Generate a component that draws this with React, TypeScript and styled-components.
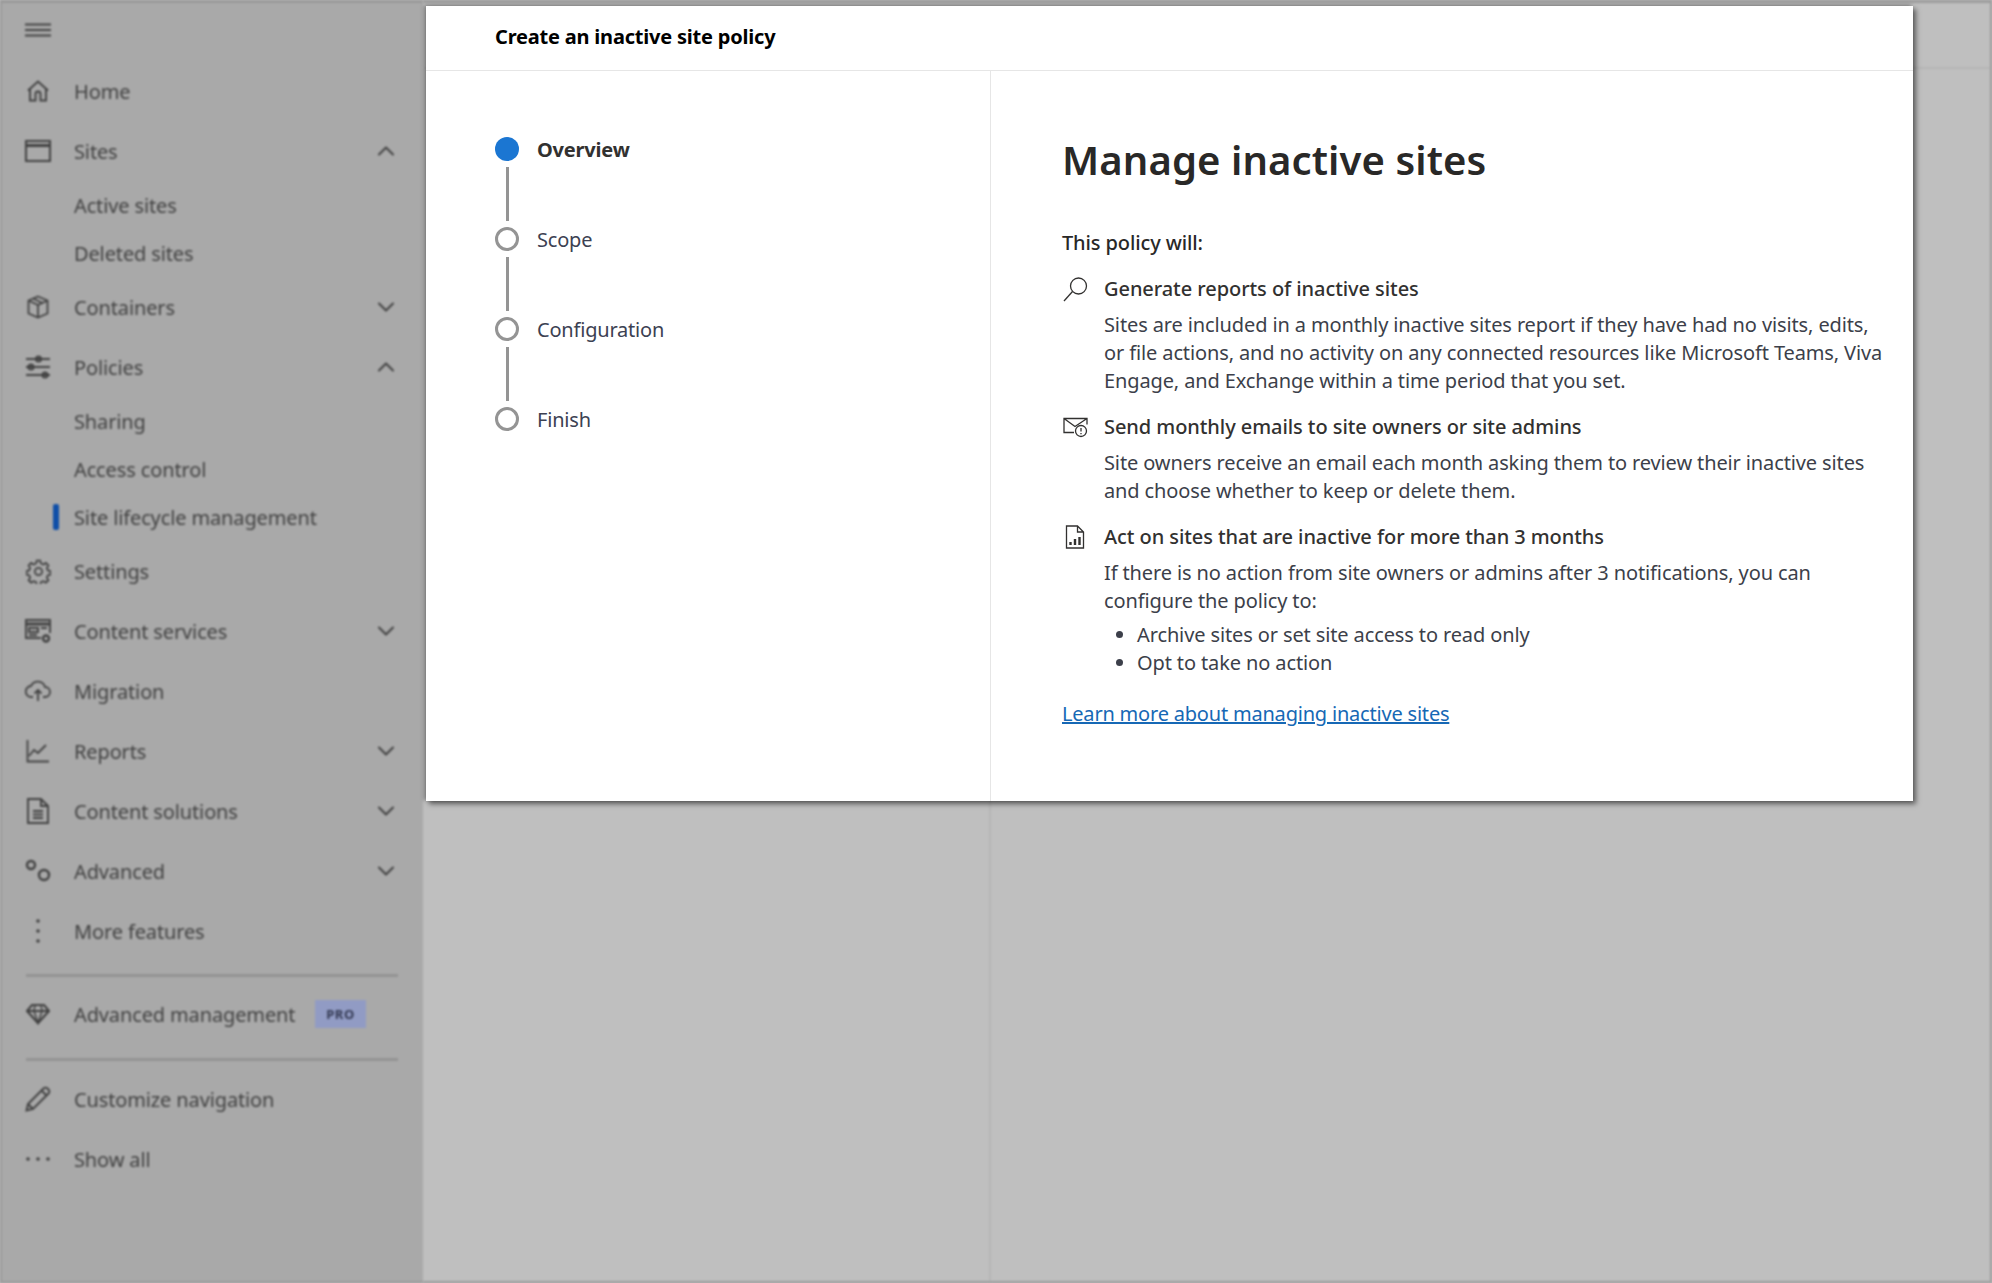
import React from "react";
import styled, { createGlobalStyle } from "styled-components";
import { ChevronDown, ChevronUp } from "lucide-react";

const GlobalStyle = createGlobalStyle`
  html, body {
    margin: 0;
    padding: 0;
    background: #bfbfbf;
  }
  * {
    box-sizing: border-box;
  }
`;

const font = `"Noto Sans", "Open Sans", "Liberation Sans", sans-serif`;

const Page = styled.div`
  position: relative;
  width: 1992px;
  height: 1283px;
  overflow: hidden;
  display: flex;
  font-family: ${font};
  background: #bfbfbf;
`;

const Backdrop = styled.div`
  flex: 1;
  display: flex;
  filter: blur(0.8px);
  border: 2px solid #9c9c9c;
  border-left: 0;
  border-top-width: 3px;
`;

const Sidebar = styled.nav`
  width: 423px;
  flex: none;
  background: #a9a9a9;
  border: 2px solid #999;
  border-right: 0;
  border-top-width: 3px;
  filter: blur(1px);
  color: #414141;
`;

const Burger = styled.div`
  height: 58px;
  padding: 20px 0 0 23px;
`;

const Row = styled.div<{ $sub?: boolean }>`
  position: relative;
  display: flex;
  align-items: center;
  height: ${(p) => (p.$sub ? "48px" : "60px")};
  padding-left: ${(p) => (p.$sub ? "72px" : "23px")};
  padding-right: 23px;
  font-size: 20px;
  letter-spacing: -0.13px;
`;

const IconSlot = styled.span`
  width: 26px;
  height: 26px;
  margin-right: 23px;
  flex: none;
  display: flex;
  align-items: center;
  justify-content: center;
`;

const Label = styled.span`
  flex: 1;
  white-space: nowrap;
`;

const Marker = styled.span`
  position: absolute;
  left: 51px;
  top: 11px;
  width: 6px;
  height: 26px;
  border-radius: 2px;
  background: #0f4fa8;
`;

const Divider = styled.div<{ $last?: boolean }>`
  height: 3px;
  margin: ${(p) => (p.$last ? "14px 25px 8px 24px" : "13px 25px 7px 24px")};
  background: #939393;
`;

const ProBadge = styled.span`
  margin-right: 34px;
  width: 51px;
  height: 28px;
  display: flex;
  align-items: center;
  justify-content: center;
  background: #919bc4;
  color: #343a54;
  font-size: 13px;
  font-weight: 700;
  letter-spacing: 0.6px;
`;

const Main = styled.div`
  flex: 1;
  display: flex;
  flex-direction: column;
`;

const MainHeader = styled.div`
  height: 66px;
  border-bottom: 2px solid #b6b6b6;
`;

const MainBody = styled.div`
  flex: 1;
  margin-left: 566px;
  border-left: 2px solid #b6b6b6;
`;

const Panel = styled.section`
  position: absolute;
  left: 426px;
  top: 6px;
  width: 1487px;
  height: 795px;
  display: flex;
  flex-direction: column;
  background: #fff;
  box-shadow: 3px 3px 5px rgba(0, 0, 0, 0.5), -2px -1px 4px rgba(0, 0, 0, 0.35);
`;

const PanelHeader = styled.header`
  height: 65px;
  flex: none;
  display: flex;
  align-items: center;
  padding: 0 0 4px 69px;
  border-bottom: 1px solid #e6e6e6;
  font-size: 20px;
  font-weight: 700;
  letter-spacing: -0.2px;
  color: #000;
`;

const PanelBody = styled.div`
  flex: 1;
  display: flex;
`;

const StepColumn = styled.div`
  width: 565px;
  flex: none;
  padding: 66px 0 0 69px;
  border-right: 1px solid #e6e6e6;
`;

const Step = styled.div`
  display: flex;
  align-items: center;
  height: 24px;
`;

const StepDot = styled.span<{ $active?: boolean }>`
  width: 24px;
  height: 24px;
  border-radius: 50%;
  flex: none;
  border: ${(p) => (p.$active ? "none" : "3px solid #949494")};
  background: ${(p) => (p.$active ? "#1b76d2" : "#fff")};
`;

const StepLabel = styled.span<{ $active?: boolean }>`
  margin-left: 18px;
  font-size: 20px;
  letter-spacing: -0.2px;
  font-weight: ${(p) => (p.$active ? 700 : 400)};
  color: ${(p) => (p.$active ? "#323130" : "#3c4152")};
`;

const StepLine = styled.div`
  width: 3px;
  height: 54px;
  margin: 6px 0 6px 11px;
  background: #949494;
`;

const Content = styled.div`
  flex: 1;
  padding: 0 0 0 71px;
  color: #3c3f4a;
  font-size: 20px;
  line-height: 28px;
  letter-spacing: -0.12px;
`;

const Title = styled.h1`
  margin: 61px 0 0;
  height: 56px;
  font-size: 40px;
  line-height: 56px;
  font-weight: 600;
  letter-spacing: 0.1px;
  color: #292827;
`;

const Lead = styled.div`
  margin-top: 41px;
  font-weight: 500;
  color: #292827;
`;

const Item = styled.div`
  margin-top: 18px;
  display: grid;
  grid-template-columns: 42px 1fr;
`;

const ItemIcon = styled.span`
  width: 26px;
  height: 28px;
  display: flex;
  align-items: center;
  justify-content: center;
  color: #323130;
`;

const ItemTitle = styled.div`
  font-weight: 500;
  margin-bottom: 8px;
  letter-spacing: -0.07px;
  color: #323130;
`;

const ItemText = styled.div`
  grid-column: 2;
  white-space: nowrap;
`;

const Bullets = styled.ul`
  margin: 6px 0 0;
  padding: 0 0 0 33px;
`;

const MoreLink = styled.a`
  display: inline-block;
  margin-top: 23px;
  color: #1668b5;
  letter-spacing: -0.2px;
  text-decoration: underline;
`;

const Glyph = styled.svg`
  display: block;
  fill: none;
  stroke: currentColor;
`;

const SolidGlyph = styled.svg`
  display: block;
  fill: currentColor;
`;

const HomeIcon = () => (
  <Glyph width="24" height="24" viewBox="0 0 24 24" strokeWidth="1.9">
    <path d="M2 11.5 12 2.5l10 9M4 10v11.5h5.5V15a2.500 2.500 0 0 1 5 0v6.5H20V10" />
  </Glyph>
);
const SitesIcon = () => (
  <Glyph width="26" height="22" viewBox="0 0 26 22" strokeWidth="2">
    <rect x="1" y="1" width="24" height="20" />
    <path d="M1 5.5h24" strokeWidth="3" />
  </Glyph>
);
const BoxIcon = () => (
  <Glyph width="24" height="24" viewBox="0 0 24 24" strokeWidth="1.8">
    <path d="M12 1.5 21.5 5.5v13L12 22.5 2.5 18.5v-13zM2.5 5.500 12 10l9.500-4.500M12 10v12.500M7 3.500l9.500 4.500" />
  </Glyph>
);
const SlidersIcon = () => (
  <Glyph width="26" height="26" viewBox="0 0 26 26" strokeWidth="2">
    <path d="M1 5h24M1 13h24M1 21h24" />
    <circle cx="13.5" cy="5" r="2.5" />
    <circle cx="6" cy="13" r="2.5" />
    <circle cx="20" cy="21" r="2.5" />
  </Glyph>
);
const GearIcon = () => (
  <Glyph width="25" height="25" viewBox="0 0 24 24" strokeWidth="1.7">
    <circle cx="12" cy="12" r="3.5" />
    <path d="M10.3 1.5h3.400l.6 2.800 2.400 1 2.400-1.500 2.400 2.400-1.500 2.400 1 2.400 2.500.6v3.400l-2.500.6-1 2.400 1.500 2.400-2.400 2.400-2.400-1.500-2.400 1-.6 2.500h-3.400l-.6-2.500-2.400-1-2.400 1.500-2.400-2.400 1.500-2.400-1-2.400-2.500-.6v-3.400l2.500-.6 1-2.400-1.500-2.400 2.400-2.400 2.400 1.500 2.400-1z" />
  </Glyph>
);
const ServicesIcon = () => (
  <Glyph width="26" height="26" viewBox="0 0 26 26" strokeWidth="1.9">
    <path d="M16 20H1V2h24v13" />
    <path d="M1 6h24" strokeWidth="3" />
    <path d="M4 10h9v4H4zM4 17h8M16 10h6" />
    <circle cx="21" cy="20.5" r="3" strokeWidth="2.4" />
  </Glyph>
);
const CloudIcon = () => (
  <Glyph width="26" height="24" viewBox="0 0 26 24" strokeWidth="1.8">
    <path d="M8 18H6.500a5.500 5.500 0 0 1-.5-11 7.500 7.500 0 0 1 14 1 5 5 0 0 1 0 10H18" />
    <path d="M13 22V11M9.500 14.500 13 11l3.500 3.500" />
  </Glyph>
);
const ChartIcon = () => (
  <Glyph width="24" height="24" viewBox="0 0 24 24" strokeWidth="1.8">
    <path d="M1.5 1v21.500H23M3 17l5-6 4 3 8-8" />
  </Glyph>
);
const DocIcon = () => (
  <Glyph width="24" height="26" viewBox="0 0 24 26" strokeWidth="1.9">
    <path d="M2 1h13l7 7v17H2zM15 1v7h7M7 13h10M7 16.500h10M7 20h10" />
  </Glyph>
);
const GearsIcon = () => (
  <Glyph width="26" height="24" viewBox="0 0 26 24" strokeWidth="2.4">
    <circle cx="6" cy="6" r="4" />
    <circle cx="19" cy="16" r="5" />
  </Glyph>
);
const DotsIcon = ({ vertical }: { vertical?: boolean }) => (
  <SolidGlyph width="26" height="26" viewBox="0 0 26 26">
    {(vertical ? [[13, 3], [13, 13], [13, 23]] : [[3, 13], [13, 13], [23, 13]]).map(([cx, cy]) => (
      <circle key={`${cx}-${cy}`} cx={cx} cy={cy} r="1.8" />
    ))}
  </SolidGlyph>
);
const GemIcon = () => (
  <Glyph width="24" height="24" viewBox="0 0 24 24" strokeWidth="2.2">
    <path d="M6 3h12l5 6-11 12L1 9zM1 9h22" />
    <path d="M8 9l4 12 4-12M9 3 8 9M15 3l1 6" strokeWidth="1.5" />
  </Glyph>
);
const PencilIcon = () => (
  <Glyph width="26" height="26" viewBox="0 0 26 26" strokeWidth="1.9">
    <path d="M1.5 24.500 3 18 18.500 2.500a2.800 2.800 0 0 1 4 0l1 1a2.800 2.800 0 0 1 0 4L8 23zM3 18l5 5M16.500 4.500l5 5" />
  </Glyph>
);
const BurgerIcon = () => (
  <Glyph width="26" height="14" viewBox="0 0 26 14" strokeWidth="2">
    <path d="M0 1.5h26M0 7h26M0 12.500h26" />
  </Glyph>
);
const SearchIcon = () => (
  <Glyph width="25" height="25" viewBox="0 0 25 25" strokeWidth="1.3">
    <circle cx="15.500" cy="9" r="8" />
    <path d="M9.500 14.500 1 24" />
  </Glyph>
);
const MailIcon = () => (
  <Glyph width="25" height="21" viewBox="0 0 25 21" strokeWidth="1.3">
    <path d="M11 15.500H1V1.500h23v6M1 1.500l11 8 12-8" />
    <circle cx="18" cy="14" r="5.500" />
    <path d="M18 11v3.500M18 16v1.200" />
  </Glyph>
);
const ReportIcon = () => (
  <Glyph width="20" height="24" viewBox="0 0 20 24" strokeWidth="1.3">
    <path d="M1.5 1h11l6 6v16h-17zM12.500 1v6h6" />
    <path d="M5.500 20v-3M10 20v-6M14.500 20v-8" strokeWidth="2.4" />
  </Glyph>
);

const Chevron = ({ up }: { up?: boolean }) =>
  up ? <ChevronUp size={28} strokeWidth={1.7} /> : <ChevronDown size={28} strokeWidth={1.7} />;

type NavEntry = {
  label: string;
  icon?: React.ReactNode;
  open?: boolean;
  closed?: boolean;
  sub?: boolean;
  marked?: boolean;
};

const mainNav: NavEntry[] = [
  { label: "Home", icon: <HomeIcon /> },
  { label: "Sites", icon: <SitesIcon />, open: true },
  { label: "Active sites", sub: true },
  { label: "Deleted sites", sub: true },
  { label: "Containers", icon: <BoxIcon />, closed: true },
  { label: "Policies", icon: <SlidersIcon />, open: true },
  { label: "Sharing", sub: true },
  { label: "Access control", sub: true },
  { label: "Site lifecycle management", sub: true, marked: true },
  { label: "Settings", icon: <GearIcon /> },
  { label: "Content services", icon: <ServicesIcon />, closed: true },
  { label: "Migration", icon: <CloudIcon /> },
  { label: "Reports", icon: <ChartIcon />, closed: true },
  { label: "Content solutions", icon: <DocIcon />, closed: true },
  { label: "Advanced", icon: <GearsIcon />, closed: true },
  { label: "More features", icon: <DotsIcon vertical /> },
];

const NavRow = ({ entry }: { entry: NavEntry }) => (
  <Row $sub={entry.sub}>
    {entry.marked && <Marker />}
    {entry.icon && <IconSlot>{entry.icon}</IconSlot>}
    <Label>{entry.label}</Label>
    {entry.open && <Chevron up />}
    {entry.closed && <Chevron />}
  </Row>
);

const steps = ["Overview", "Scope", "Configuration", "Finish"];

const App = () => {
  return (
    <Page>
      <GlobalStyle />
      <Sidebar>
        <Burger>
          <BurgerIcon />
        </Burger>
        {mainNav.map((entry) => (
          <NavRow key={entry.label} entry={entry} />
        ))}
        <Divider />
        <Row>
          <IconSlot>
            <GemIcon />
          </IconSlot>
          <Label>Advanced management</Label>
          <ProBadge>PRO</ProBadge>
        </Row>
        <Divider $last />
        <Row>
          <IconSlot>
            <PencilIcon />
          </IconSlot>
          <Label>Customize navigation</Label>
        </Row>
        <Row>
          <IconSlot>
            <DotsIcon />
          </IconSlot>
          <Label>Show all</Label>
        </Row>
      </Sidebar>
      <Backdrop>
        <Main>
          <MainHeader />
          <MainBody />
        </Main>
      </Backdrop>
      <Panel>
        <PanelHeader>Create an inactive site policy</PanelHeader>
        <PanelBody>
          <StepColumn>
            {steps.map((step, i) => (
              <React.Fragment key={step}>
                <Step>
                  <StepDot $active={i === 0} />
                  <StepLabel $active={i === 0}>{step}</StepLabel>
                </Step>
                {i < steps.length - 1 && <StepLine />}
              </React.Fragment>
            ))}
          </StepColumn>
          <Content>
            <Title>Manage inactive sites</Title>
            <Lead>This policy will:</Lead>
            <Item>
              <ItemIcon>
                <SearchIcon />
              </ItemIcon>
              <ItemTitle>Generate reports of inactive sites</ItemTitle>
              <ItemText>
                Sites are included in a monthly inactive sites report if they have had no visits, edits,
                <br />
                or file actions, and no activity on any connected resources like Microsoft Teams, Viva
                <br />
                Engage, and Exchange within a time period that you set.
              </ItemText>
            </Item>
            <Item>
              <ItemIcon>
                <MailIcon />
              </ItemIcon>
              <ItemTitle>Send monthly emails to site owners or site admins</ItemTitle>
              <ItemText>
                Site owners receive an email each month asking them to review their inactive sites
                <br />
                and choose whether to keep or delete them.
              </ItemText>
            </Item>
            <Item>
              <ItemIcon>
                <ReportIcon />
              </ItemIcon>
              <ItemTitle>Act on sites that are inactive for more than 3 months</ItemTitle>
              <ItemText>
                If there is no action from site owners or admins after 3 notifications, you can
                <br />
                configure the policy to:
                <Bullets>
                  <li>Archive sites or set site access to read only</li>
                  <li>Opt to take no action</li>
                </Bullets>
              </ItemText>
            </Item>
            <MoreLink href="#">Learn more about managing inactive sites</MoreLink>
          </Content>
        </PanelBody>
      </Panel>
    </Page>
  );
};

export default App;
